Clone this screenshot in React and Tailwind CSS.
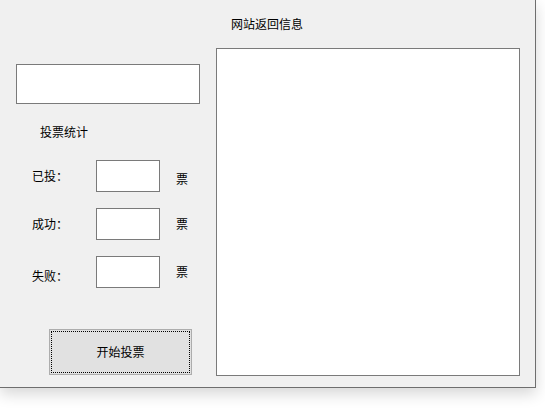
import React from "react";

const font = "font-['Noto_Sans_CJK_SC','Noto_Sans',sans-serif]";

function TextBox({ className }) {
  return <div className={`bg-white border border-[#7a7a7a] ${className}`} />;
}

/* one statistics row: label, count box, 票 */
function StatRow({ label, labelTop, unitTop, className }) {
  return (
    <div className={`flex items-start h-[32px] ${className}`}>
      <span
        className="ml-[32px] w-[64px] text-[12px] leading-[12px]"
        style={{ marginTop: labelTop }}
      >
        {label}
      </span>
      <TextBox className="w-[64px] h-[32px]" />
      <span
        className="ml-[16px] text-[12px] leading-[12px]"
        style={{ marginTop: unitTop }}
      >
        票
      </span>
    </div>
  );
}

export default function App() {
  return (
    <div className={`w-[545px] h-[417px] bg-white overflow-hidden text-black ${font}`}>
      <div className="w-[536px] h-[388px] bg-[#f0f0f0] border-r border-b border-[#6e6e6e] shadow-[0_6px_14px_rgba(0,0,0,0.16)] flex">
        {/* left column */}
        <div className="w-[216px] flex flex-col">
          <TextBox className="mt-[64px] ml-[16px] w-[184px] h-[40px]" />
          <span className="mt-[22px] ml-[40px] text-[12px] leading-[12px]">投票统计</span>

          <StatRow label="已投：" labelTop={10} unitTop={13} className="mt-[22px]" />
          <StatRow label="成功：" labelTop={10} unitTop={10} className="mt-[16px]" />
          <StatRow label="失败：" labelTop={14} unitTop={10} className="mt-[16px]" />

          <button className="mt-[41px] ml-[49px] w-[143px] h-[46px] bg-[#e1e1e1] border border-[#adadad] p-[1px]">
            <div className="w-full h-full border border-dotted border-black flex items-center justify-center text-[12px] leading-[12px]">
              开始投票
            </div>
          </button>
        </div>

        {/* right column */}
        <div className="flex flex-col">
          <div className="h-[48px] pl-[15px] pt-[18px] text-[12px] leading-[12px]">网站返回信息</div>
          <TextBox className="w-[304px] h-[328px]" />
        </div>
      </div>
    </div>
  );
}
